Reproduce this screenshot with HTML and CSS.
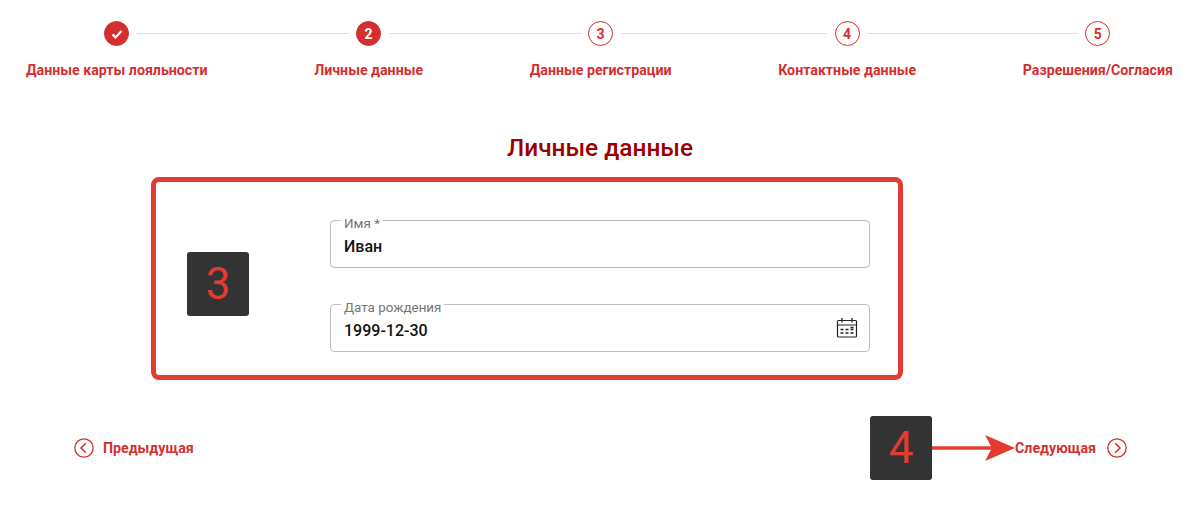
FILE: index.html
```html
<!DOCTYPE html>
<html lang="ru">
<head>
 <meta charset="UTF-8">
 <meta name="viewport" content="width=device-width, initial-scale=1.0">
 <title>Личные данные</title>
 <link rel="stylesheet" href="styles.css">
</head>
<body>

 <ol class="stepper">
  <li class="step">
   <span class="stepCircle filled">
    <svg class="checkIcon" viewBox="0 0 14 14"><path d="M2.5 7.4l3 3 6-6.4" fill="none" stroke="#fff" stroke-width="2.2"/></svg>
   </span>
   <span class="stepLine lineOne"></span>
   <span class="stepLabel">Данные карты лояльности</span>
  </li>
  <li class="step">
   <span class="stepCircle filled">2</span>
   <span class="stepLine lineTwo"></span>
   <span class="stepLabel">Личные данные</span>
  </li>
  <li class="step">
   <span class="stepCircle">3</span>
   <span class="stepLine lineThree"></span>
   <span class="stepLabel">Данные регистрации</span>
  </li>
  <li class="step">
   <span class="stepCircle">4</span>
   <span class="stepLine lineFour"></span>
   <span class="stepLabel">Контактные данные</span>
  </li>
  <li class="step">
   <span class="stepCircle">5</span>
   <span class="stepLabel">Разрешения/Согласия</span>
  </li>
 </ol>

 <h1 class="pageTitle">Личные данные</h1>

 <section class="formBox">
  <div class="marker">3</div>
  <form class="fields">
   <fieldset class="field">
    <legend><span class="fieldLabel">Имя *</span></legend>
    <div class="fieldRow">
     <span class="fieldValue">Иван</span>
    </div>
   </fieldset>
   <fieldset class="field">
    <legend><span class="fieldLabel">Дата рождения</span></legend>
    <div class="fieldRow">
     <span class="fieldValue">1999-12-30</span>
     <svg class="calendarIcon" viewBox="0 0 22 22" fill="none" stroke="#222" stroke-width="1.2">
      <rect x="1.5" y="3.5" width="19" height="16.5" rx="1"/>
      <path d="M1.5 8h19M6 1v4.5M16 1v4.5"/>
      <path d="M4.5 12.5h3M9.5 12.5h3M14.5 12.5h3M4.5 16h3M9.5 16h3M14.5 16h3M14.5 10.5h3" stroke-width="1.4"/>
     </svg>
    </div>
   </fieldset>
  </form>
 </section>

 <nav class="pager">
  <a class="pagerLink">
   <svg class="pagerIcon" viewBox="0 0 20 20" fill="none" stroke="#d32f2f" stroke-width="1.3"><circle cx="10" cy="10" r="9.2"/><path d="M11.8 5.2L7 10l4.8 4.8" stroke-width="1.5"/></svg>
   <span>Предыдущая</span>
  </a>
  <div class="pagerNext">
   <div class="marker">4</div>
   <svg class="arrow" viewBox="0 0 83 28"><path d="M0 14h60" stroke="#e53a2f" stroke-width="3.4"/><path d="M53 1l30 13-30 13 7-13z" fill="#e53a2f"/></svg>
   <a class="pagerLink">
    <span>Следующая</span>
    <svg class="pagerIcon" viewBox="0 0 20 20" fill="none" stroke="#d32f2f" stroke-width="1.3"><circle cx="10" cy="10" r="9.2"/><path d="M8.2 5.2L13 10l-4.8 4.8" stroke-width="1.5"/></svg>
   </a>
  </div>
 </nav>

</body>
</html>
```

FILE: styles.css
```css
*{
 box-sizing: border-box;
}

body{
 margin: 0;
 height: 505px;
 overflow: hidden;
 background-color: white;
 font-family: Roboto, "Liberation Sans", sans-serif;
 color: #d32f2f;
}

.stepper{
 display: flex;
 justify-content: space-between;
 list-style: none;
 margin: 0;
 padding: 21px 29px 0 26px;
}

.step{
 position: relative;
 display: flex;
 flex-direction: column;
 align-items: center;
 gap: 15px;
}

.stepCircle{
 display: flex;
 align-items: center;
 justify-content: center;
 width: 25px;
 height: 25px;
 border: 1px solid #d32f2f;
 border-radius: 50%;
 font-size: 14px;
 font-weight: 700;
}

.stepCircle.filled{
 background-color: #d32f2f;
 color: white;
}

.checkIcon{
 width: 14px;
 height: 14px;
}

.stepLabel{
 font-size: 14.2px;
 font-weight: 700;
 line-height: 18px;
 white-space: nowrap;
}

.stepLine{
 position: absolute;
 top: 12px;
 left: calc(50% + 20px);
 height: 1px;
 background-color: #e0e0e0;
}

.lineOne{ width: 212px; }
.lineTwo{ width: 193px; }
.lineThree{ width: 206px; }
.lineFour{ width: 211px; }

.pageTitle{
 margin: 53px 0 0;
 padding-right: 2px;
 text-align: center;
 font-size: 24.4px;
 font-weight: 500;
 line-height: 32px;
 color: #9b0000;
}

.formBox{
 display: flex;
 align-items: center;
 gap: 81px;
 width: 752px;
 height: 203px;
 margin: 13px 0 0 151px;
 padding: 11px 28px 0 31px;
 border: 5px solid #e03c33;
 border-radius: 8px;
}

.marker{
 display: flex;
 align-items: center;
 justify-content: center;
 flex: none;
 width: 62px;
 height: 64px;
 border-radius: 3px;
 background-color: #333;
 color: #e03c33;
 font-size: 44px;
}

.fields{
 flex: 1;
 display: flex;
 flex-direction: column;
 gap: 30px;
 margin-top: -2px;
}

.field{
 height: 54px;
 margin: 0;
 padding: 0 11px 0 13px;
 border: 1px solid #bdbdbd;
 border-radius: 4px;
}

.field legend{
 margin-left: -3px;
 padding: 0 3px;
 font-size: 13.4px;
 line-height: 13px;
 color: #757575;
}

/* label text sits a bit under the border line */
.fieldLabel{
 position: relative;
 top: 3px;
}

.fieldRow{
 display: flex;
 align-items: center;
 justify-content: space-between;
 height: 40px;
}

.fieldValue{
 margin-top: -2px;
 font-size: 16px;
 font-weight: 500;
 color: #111;
}

.calendarIcon{
 width: 22px;
 height: 22px;
 margin-top: -6px;
}

.pager{
 display: flex;
 align-items: center;
 justify-content: space-between;
 margin-top: 36px;
 padding: 0 75px 0 74px;
}

.pagerLink{
 display: flex;
 align-items: center;
 gap: 9px;
 font-size: 14.2px;
 font-weight: 700;
}

.pagerIcon{
 width: 20px;
 height: 20px;
}

.pagerNext{
 display: flex;
 align-items: center;
}

.pagerNext .pagerLink{
 gap: 11px;
}

.arrow{
 width: 83px;
 height: 28px;
}
```
